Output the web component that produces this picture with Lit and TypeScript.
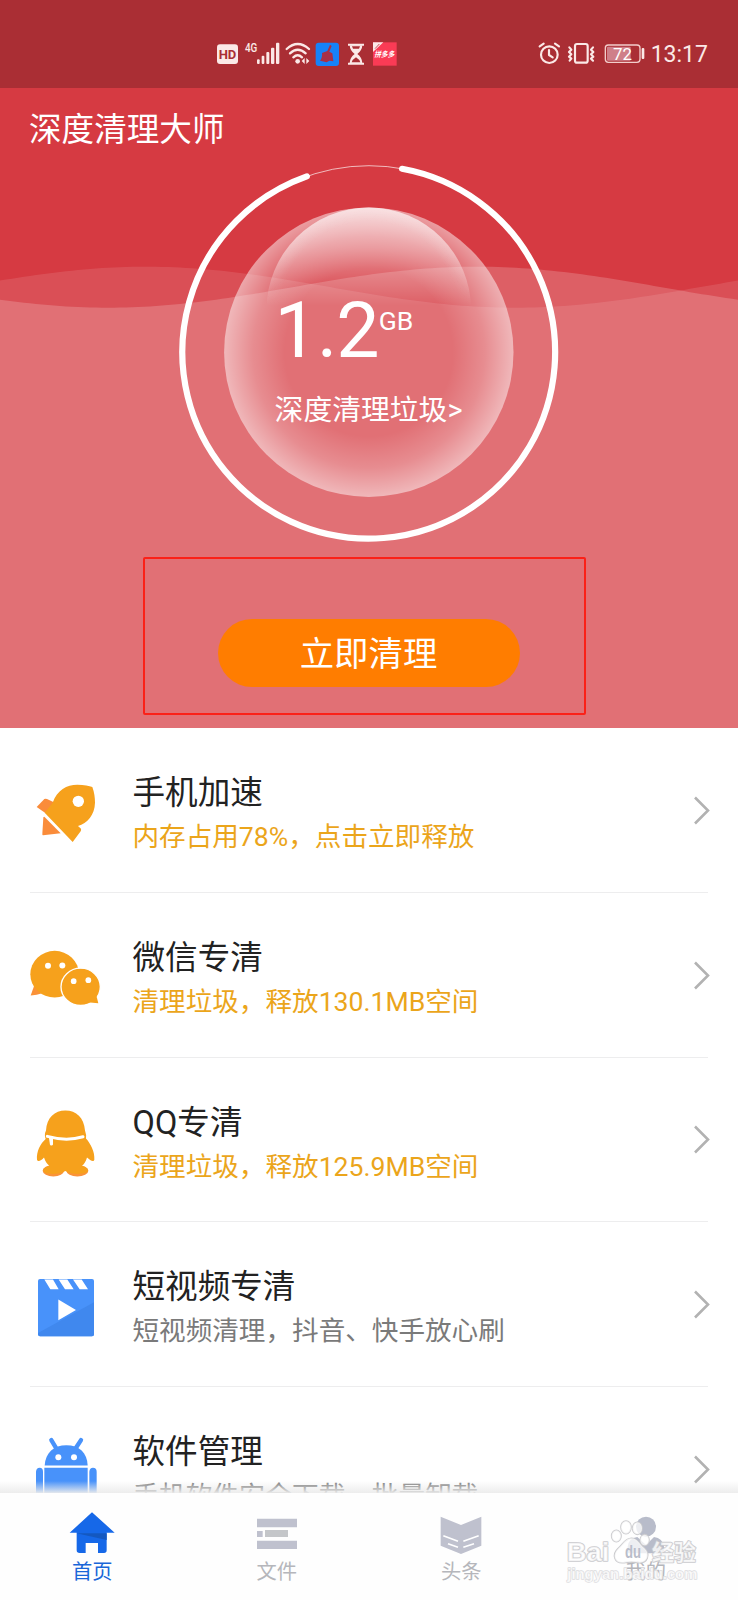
import { LitElement, html, svg, css } from "lit";
import { customElement, property } from "lit/decorators.js";

const FONT = css`Roboto, "Noto Sans CJK SC", sans-serif`;

/** Closed path of a sine wave whose crest lies at crestX, filled down to the bottom. */
function wave(crestX: number): string {
  let d = "M0 728";
  for (let x = 0; x <= 738; x += 6) {
    const y = 287.2 - 20.5 * Math.cos(((x - crestX) / 738) * 2 * Math.PI);
    d += `L${x} ${y.toFixed(2)}`;
  }
  return d + "V728Z";
}

const rocket = svg`<svg class="icon" viewBox="78 -36 240 494.4">
  <path fill="#fa8c3a" d="M110 201L133 177Q136 175 141 177L160 186L152 215L135 218Z"/>
  <path fill="#f6a11c" d="M134 218L158 188C172 150 200 134 232 134C252 134 268 137 277 141C283 158 285 172 285 188C284 225 262 250 234 258L243 266Q244 270 242 274L218 306Z"/>
  <path fill="#fa8c3a" d="M133 230L182 280L129 286Q127 286 127 283L130 232Z"/>
  <circle cx="235" cy="184" r="17" fill="#fff"/>
</svg>`;

const chat = svg`<svg class="icon" viewBox="78 458.4 240 494.4">
  <path fill="#fa9238" d="M103 735L92 766Q112 764 124 760Z"/>
  <ellipse cx="164" cy="702" rx="73" ry="70" fill="#f6a11c"/>
  <ellipse cx="242" cy="740" rx="59" ry="56" fill="#f6a11c" stroke="#fff" stroke-width="4"/>
  <path fill="#f6a11c" d="M288 762L295 789L262 786Z"/>
  <g fill="#fff"><circle cx="144" cy="677" r="9"/><circle cx="187" cy="676" r="9"/><circle cx="221" cy="723" r="8.5"/><circle cx="265" cy="720" r="8.5"/></g>
</svg>`;

const penguin = svg`<svg class="icon" viewBox="78 -67.2 240 494.4">
  <ellipse cx="160" cy="271" rx="32" ry="17" fill="#fa9238"/><ellipse cx="232" cy="271" rx="33" ry="17" fill="#fa9238"/>
  <path fill="#f6a11c" d="M138 150C140 112 164 90 196 90C229 90 252 112 255 150Q260 164 258 174C272 190 285 214 283 238C280 247 270 238 261 231C258 243 252 251 246 256C258 260 265 265 264 272C258 283 215 284 196 272C178 284 134 283 130 272C129 265 136 260 148 256C141 250 136 243 132 231C124 240 114 246 111 238C109 214 121 190 137 176Q132 162 138 150Z"/>
  <path fill="none" stroke="#fff" stroke-width="9" stroke-linecap="round" d="M142 168Q200 184 249 169"/>
  <path fill="#fff" d="M147 173H159V192Q158 196 152 195Q149 193 149 186Z"/>
</svg>`;

const clip = svg`<svg class="icon" viewBox="78 427.2 240 494.4">
  <rect x="114" y="598" width="168" height="172" rx="6" fill="#4892fa"/>
  <path fill="#4088ee" d="M282 668V764Q282 770 276 770H120Q114 770 114 760Z"/>
  <path fill="#fff" d="M133 600H159L176 629H151ZM176 600H202L221 629H195ZM219 600H245L264 629H239ZM175 660L228 691L175 722Z"/>
</svg>`;

const robot = svg`<svg class="icon" viewBox="78 -68.4 240 494.4">
  <g stroke="#4892fa" stroke-width="13" stroke-linecap="round"><path d="M154 91L168 114M243 91L228 114"/></g>
  <path fill="#4892fa" d="M134 167C136 128 162 106 199 106C237 106 262 128 263 167Z"/>
  <path fill="#4892fa" d="M133 174H263V300H133ZM108 186Q109 174 119 174Q129 174 129 186V290H108ZM268 186Q269 174 279 174Q290 174 290 186V290H268Z"/>
  <circle cx="175" cy="142" r="9" fill="#fff"/><circle cx="222" cy="142" r="9" fill="#fff"/>
</svg>`;

const rows = [
  { icon: rocket, title: "手机加速", note: "内存占用78%，点击立即释放", warn: true },
  { icon: chat, title: "微信专清", note: "清理垃圾，释放130.1MB空间", warn: true },
  { icon: penguin, title: "QQ专清", note: "清理垃圾，释放125.9MB空间", warn: true },
  { icon: clip, title: "短视频专清", note: "短视频清理，抖音、快手放心刷", warn: false },
  { icon: robot, title: "软件管理", note: "手机软件安全下载，批量卸载", warn: false },
];

@customElement("status-bar")
class StatusBar extends LitElement {
  static styles = css`
    :host { display: flex; justify-content: space-between; box-sizing: border-box; height: 88px; padding: 30px 0 0 200px; background: #aa2e34; }
    svg { display: block; height: 50px; }
    .left { width: 220px; }
    .right { width: 218px; }
    text { font-family: ${FONT}; }
  `;
  render() {
    return html`
      <svg class="left" viewBox="0 0 660 150">
        <rect x="51" y="43" width="63" height="59" rx="9" fill="#fbe9e7"/>
        <text x="56" y="86" font-size="38" font-weight="700" fill="#aa2e34" textLength="53" lengthAdjust="spacingAndGlyphs">HD</text>
        <text x="135" y="67" font-size="40" font-weight="500" fill="#fbe9e7" textLength="37" lengthAdjust="spacingAndGlyphs">4G</text>
        <g fill="#fbe9e7"><rect x="171" y="88" width="8" height="14" rx="3"/><rect x="185" y="77" width="8" height="25" rx="3"/><rect x="199" y="66" width="9" height="36" rx="3"/><rect x="213" y="53" width="10" height="49" rx="3"/><rect x="228" y="38" width="10" height="64" rx="3"/></g>
        <g fill="none" stroke="#fbe9e7" stroke-width="7" stroke-linecap="round"><path d="M260 57Q293 27 327 57"/><path d="M270 70Q293 48 317 70"/><path d="M280 82Q293 70 306 82"/></g>
        <circle cx="293" cy="94" r="7" fill="#fbe9e7"/><path fill="#fbe9e7" d="M305 93L314 84V102ZM328 93L319 84V102Z"/>
        <rect x="347" y="38" width="70" height="70" rx="9" fill="#1782f8"/>
        <path fill="#a83048" d="M390 44L395 48L388 65L397 70L400 94L388 92L380 97L360 92Q368 82 366 69L382 63Z"/>
        <path stroke="#fbe9e7" fill="none" stroke-width="6" d="M444 44H492M444 101H492"/>
        <path fill="#fbe9e7" d="M449 46H487Q486 62 472 72Q486 82 487 99H449Q450 82 464 72Q450 62 449 46Z"/>
        <path fill="#aa2e34" d="M456 49H480L477 56H459ZM455 97Q458 88 468 82Q478 88 481 97Z"/>
        <rect x="519" y="37" width="71" height="70" fill="#fa3b55"/><path fill="#fbe9e7" d="M519 37H550L519 66Z"/><path stroke="#c54b58" stroke-width="3" d="M525 56L538 42"/>
        <text x="523" y="81" font-size="23" font-weight="700" font-style="italic" fill="#fff" textLength="60" lengthAdjust="spacingAndGlyphs">拼多多</text>
      </svg>
      <svg class="right" viewBox="0 0 654 150">
        <g fill="none" stroke="#fbe9e7" stroke-width="6.5" stroke-linecap="round" stroke-linejoin="round"><circle cx="88" cy="74" r="25"/><path d="M59 49L71 41M117 49L105 41M87 60V75L98 82"/>
        <rect x="165" y="42" width="38" height="56" rx="6"/><path d="M148 52L154 59L147 66L154 73L147 80L154 86L149 92M219 52L213 59L220 66L213 73L220 80L213 86L219 92"/></g>
        <rect x="256" y="45" width="104" height="52" rx="9" fill="none" stroke="#f2cdcb" stroke-width="4"/><rect x="261" y="50" width="71" height="42" rx="3" fill="#cf7f89"/><rect x="365" y="54" width="8" height="33" rx="3" fill="#fbe9e7"/>
        <text x="279" y="89" font-size="50" fill="#fff" textLength="57" lengthAdjust="spacingAndGlyphs">72</text>
        <text x="392" y="97" font-size="69" fill="#fbe9e7" textLength="172">13:17</text>
      </svg>`;
  }
}

@customElement("clean-gauge")
class CleanGauge extends LitElement {
  static styles = css`
    :host { display: block; position: relative; width: 380px; height: 380px; font-family: ${FONT}; color: #fff; }
    svg { display: block; width: 380px; height: 380px; }
    .label { position: absolute; inset: 0; display: flex; flex-direction: column; align-items: flex-start; box-sizing: border-box; padding: 124px 0 0 96px; }
    .amount { display: flex; align-items: flex-start; height: 90px; }
    .value { font-size: 77px; line-height: 90px; letter-spacing: -0.9px; }
    .unit { font-size: 26.5px; line-height: 30px; margin-top: 20px; }
    .hint { font-size: 28.8px; line-height: 40px; margin-top: 14px; white-space: nowrap; }
  `;
  render() {
    return html`
      <svg viewBox="178.6 161.4 380 380">
        <defs>
          <radialGradient id="orb"><stop offset="0.58" stop-color="#fff" stop-opacity="0"/><stop offset="0.8" stop-color="#fff" stop-opacity="0.2"/><stop offset="1" stop-color="#fff" stop-opacity="0.5"/></radialGradient>
          <linearGradient id="shine" x1="0" y1="0" x2="0" y2="1"><stop offset="0" stop-color="#fff" stop-opacity="0.66"/><stop offset="0.2" stop-color="#fff" stop-opacity="0.42"/><stop offset="0.48" stop-color="#fff" stop-opacity="0"/></linearGradient>
          <radialGradient id="rim"><stop offset="0.86" stop-color="#fff" stop-opacity="0"/><stop offset="1" stop-color="#fff" stop-opacity="0.16"/></radialGradient>
          <linearGradient id="fade" x1="0" y1="0" x2="0" y2="1"><stop offset="0.25" stop-color="#fff"/><stop offset="0.48" stop-color="#000"/></linearGradient>
          <mask id="top"><rect x="260" y="200" width="220" height="215" fill="url(#fade)"/></mask>
        </defs>
        <circle cx="368.4" cy="351.6" r="144.7" fill="url(#orb)"/>
        <circle cx="368.4" cy="309.2" r="102.3" fill="url(#shine)"/>
        <circle cx="368.4" cy="309.2" r="102.3" fill="url(#rim)" mask="url(#top)"/>
        <circle cx="368.6" cy="351.5" r="186.4" fill="none" stroke="#fff" stroke-opacity="0.65" stroke-width="1"/>
        <path d="M401.6 168.2A186.4 186.4 0 1 1 306.4 175.8" fill="none" stroke="#fff" stroke-width="6.2" stroke-linecap="round"/>
      </svg>
      <div class="label">
        <div class="amount"><span class="value">1.2</span><span class="unit">GB</span></div>
        <div class="hint">深度清理垃圾&gt;</div>
      </div>`;
  }
}

@customElement("tool-row")
class ToolRow extends LitElement {
  static styles = css`
    :host { display: flex; box-sizing: border-box; height: 164.8px; margin: 0 30px; border-bottom: 1px solid #ededee; font-family: ${FONT}; }
    .icon { flex: none; display: block; width: 80px; height: 164.8px; margin-left: -4px; }
    .body { flex: 1; padding: 45px 0 0 26.5px; white-space: nowrap; }
    .title { font-size: 32.6px; line-height: 40px; color: #222; }
    .note { font-size: 26.6px; line-height: 36px; margin-top: 6px; color: #7a7a7a; }
    .warn { color: #eba51b; }
    .arrow { flex: none; align-self: center; width: 20px; height: 32px; margin-right: -4px; }
  `;
  @property({ attribute: false }) item = rows[0];
  render() {
    const { icon, title, note, warn } = this.item;
    return html`${icon}
      <div class="body">
        <div class="title">${title}</div>
        <div class="note ${warn ? "warn" : ""}">${note}</div>
      </div>
      <svg class="arrow" viewBox="0 0 20 32"><path d="M3 3.5L16 16.5L3 29.5" fill="none" stroke="#b2b2b2" stroke-width="2.6"/></svg>`;
  }
}

@customElement("tab-bar")
class TabBar extends LitElement {
  static styles = css`
    :host { position: relative; display: grid; grid-template-columns: repeat(4, 1fr); height: 107px; background: #fefefe; font-family: ${FONT}; }
    .shade { position: absolute; left: 0; right: 0; top: -12px; height: 12px; background: linear-gradient(rgba(250, 250, 250, 0), rgba(236, 236, 236, 0.95)); }
    .tab { display: flex; flex-direction: column; align-items: center; padding-top: 17px; font-size: 20.3px; line-height: 28px; color: #b5b6bb; }
    .tab svg { width: 50px; height: 46px; display: block; }
    .name { margin-top: 2px; }
    .active { color: #1a66d8; }
    .mark { position: absolute; left: 560px; top: 17px; width: 150px; height: 80px; }
    .mark text { font-family: "Liberation Sans", "Noto Sans CJK SC", sans-serif; }
  `;
  render() {
    return html`
      <div class="shade"></div>
      <div class="tab active">
        <svg viewBox="202 300 150 138"><path fill="#1668e8" d="M277 307L345 368H321V421Q321 429 313 429H295V399H258V429H240Q231 429 231 421V368H210Z"/><path fill="#1458c0" d="M231 370H321V390Z"/></svg>
        <span class="name">首页</span>
      </div>
      <div class="tab">
        <svg viewBox="756 300 150 138"><path fill="#bfc1ce" d="M771 326H891V352H771ZM771 363H788V381H771ZM771 392H891V417H771Z"/><path fill="#c4c6c9" d="M795 360H864V381H795Z"/></svg>
        <span class="name">文件</span>
      </div>
      <div class="tab">
        <svg viewBox="200 300 150 138"><path fill="#bfc1ce" d="M214 320L275 345L336 320V407L275 432L214 407Z"/><path stroke="#fff" stroke-width="5" d="M222 377L266 394M236 401L266 412M328 377L282 394M314 401L282 412"/></svg>
        <span class="name">头条</span>
      </div>
      <div class="tab">
        <svg viewBox="751 300 150 138"><circle cx="826" cy="350" r="30" fill="#b8bcca"/><path fill="#b8bcca" d="M771 430V410Q774 384 800 381L826 405L850 381Q876 384 880 410V430Z"/></svg>
        <span class="name">我的</span>
      </div>
      <svg class="mark" viewBox="570 299 450 240">
        <g fill="#fff" fill-opacity="0.75" stroke="#cbcbce" stroke-width="5" stroke-linejoin="round" paint-order="stroke">
          <text x="590" y="453" font-size="80" font-weight="700" textLength="128" lengthAdjust="spacingAndGlyphs">Bai</text>
          <ellipse cx="739" cy="377" rx="14" ry="17"/><ellipse cx="768" cy="351" rx="15" ry="19"/><ellipse cx="802" cy="354" rx="14" ry="18"/><ellipse cx="824" cy="389" rx="13" ry="16"/>
          <path d="M784 384C802 384 808 402 823 414C842 432 832 458 808 457Q784 452 762 457C732 460 726 432 744 415C759 402 766 384 784 384Z"/>
          <text x="846" y="450" font-size="66" font-weight="700" textLength="132">经验</text>
          <text x="592" y="505" font-size="42" font-weight="700" stroke="#dcdcde" stroke-width="4" textLength="390" lengthAdjust="spacingAndGlyphs">jingyan.baidu.com</text>
        </g>
        <text x="765" y="443" font-size="54" font-weight="700" fill="#b9bdca" textLength="48" lengthAdjust="spacingAndGlyphs">du</text>
      </svg>`;
  }
}

@customElement("app-root")
class AppRoot extends LitElement {
  static styles = css`
    :host { display: flex; flex-direction: column; position: relative; width: 738px; height: 1600px; overflow: hidden; background: #fff; font-family: ${FONT}; }
    .hero { position: relative; height: 728px; flex: none; background: #d63a42; color: #fff; }
    .waves { position: absolute; inset: 0; width: 738px; height: 728px; }
    .content { position: relative; display: flex; flex-direction: column; align-items: center; }
    .bar { align-self: stretch; }
    .name { align-self: flex-start; margin: 22px 0 0 29px; font-size: 32.6px; line-height: 40px; font-weight: 400; }
    .gauge { margin-top: 12px; margin-left: -0.8px; }
    .action { width: 302px; height: 68px; box-sizing: border-box; margin: 77px 0 0 -1px; padding: 2px 0 0; border: 0; border-radius: 34px; background: #ff7d00; color: #fff; font: 400 34.4px/66px ${FONT}; text-align: center; }
    .focus { position: absolute; left: 143px; top: 556.5px; width: 443px; height: 158px; box-sizing: border-box; border: 2px solid #fb2018; border-radius: 2px; }
    .list { flex: 1; min-height: 0; overflow: hidden; }
    .tabs { flex: none; }
  `;
  render() {
    return html`
      <section class="hero">
        <svg class="waves" viewBox="0 0 738 728">
          <path d=${wave(146)} fill="#fff" fill-opacity="0.11"/>
          <path d=${wave(477)} fill="#fff" fill-opacity="0.19"/>
        </svg>
        <div class="content">
          <status-bar class="bar"></status-bar>
          <div class="name">深度清理大师</div>
          <clean-gauge class="gauge"></clean-gauge>
          <button class="action">立即清理</button>
        </div>
        <div class="focus"></div>
      </section>
      <main class="list">${rows.map((r) => html`<tool-row .item=${r}></tool-row>`)}</main>
      <tab-bar class="tabs"></tab-bar>`;
  }
}
